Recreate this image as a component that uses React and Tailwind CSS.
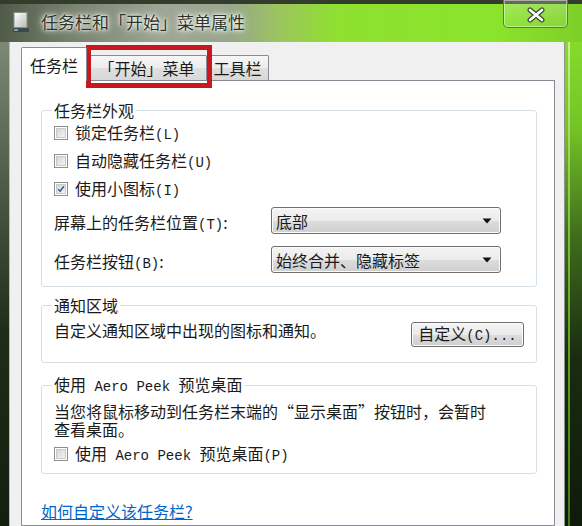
import React from "react";

function M({ children }) {
  return (
    <span className="font-['Liberation_Mono',monospace] text-[14px]">{children}</span>
  );
}

function Checkbox({ checked }) {
  return (
    <div className="w-[14px] h-[14px] shrink-0 border border-[#8e8f8f] bg-white p-[1px]">
      <div className="w-full h-full border border-[#c9c9c9] bg-[linear-gradient(135deg,#d6d6d6,#f4f4f4)] flex items-center justify-center">
        {checked && (
          <svg width="10" height="10" viewBox="0 0 10 10">
            <path d="M1.5 5.2 L4 7.8 L8.6 1.6" fill="none" stroke="#3d5391" strokeWidth="1.8" />
          </svg>
        )}
      </div>
    </div>
  );
}

function Select({ value }) {
  return (
    <div className="w-[230px] h-[27px] rounded-[3px] border border-[#707070] bg-[linear-gradient(to_bottom,#f4f4f4_0%,#ebebeb_50%,#dddddd_51%,#cfcfcf_100%)] flex items-center justify-between pl-[4px] pr-[8px] shadow-[inset_0_0_0_1px_#fbfbfb]">
      <span className="text-[16px] leading-[18px] text-[#1a1a1a]">{value}</span>
      <svg width="10" height="6" viewBox="0 0 10 6">
        <path d="M0.5 0.5 H9.5 L5 5.5 Z" fill="#111" />
      </svg>
    </div>
  );
}

function Group({ title, className = "", children }) {
  return (
    <fieldset className={"border border-[#d5dfe5] rounded-[3px] pl-[12px] pr-[12px] " + className}>
      <legend className="text-[16px] leading-[18px] px-[2px] -ml-[2px] text-[#1a1a1a]">{title}</legend>
      {children}
    </fieldset>
  );
}

export default function App() {
  return (
    <div className="relative w-[582px] h-[526px] overflow-hidden flex flex-col bg-[#16230f] font-['Noto_Sans_CJK_SC',sans-serif] text-[#1a1a1a]">
      {/* Title bar */}
      <div className="h-[42px] shrink-0 flex items-start justify-between bg-[linear-gradient(to_right,#4f5b48_0%,#76826e_12%,#9ea796_28%,#98a68a_40%,#9cc55e_48%,#8fe030_58%,#8ae42c_85%,#7dcf28_100%)] border-t-[4px] border-[#323d2c]">
        <div className="flex items-center h-[36px] pl-[13px] gap-[12px]">
          <svg width="16" height="21" viewBox="0 0 16 21">
            <defs>
              <linearGradient id="ig" x1="0" y1="0" x2="1" y2="1">
                <stop offset="0" stopColor="#ffffff" />
                <stop offset="1" stopColor="#b8bcb4" />
              </linearGradient>
            </defs>
            <rect x="1" y="0.5" width="13" height="15" fill="url(#ig)" stroke="#8a8f86" />
            <rect x="0" y="16" width="16" height="4" fill="#3c4a46" />
            <rect x="1" y="17" width="4" height="2" fill="#6fa0c8" />
          </svg>
          <span className="text-[17px] leading-[20px] text-[#2e332b] [text-shadow:0_0_8px_#ffffff,0_0_4px_#ffffff,0_0_2px_#ffffff]">
            任务栏和「开始」菜单属性
          </span>
        </div>
        <div className="w-[65px] h-[28px] -mt-[4px] mr-[14px] rounded-b-[5px] border border-t-0 border-[#5d7a3c] shadow-[inset_0_0_0_1px_rgba(255,255,255,0.45)] bg-[linear-gradient(to_bottom,rgba(255,255,255,0.25),rgba(255,255,255,0.05))] flex items-center justify-center pt-[3px]">
          <svg width="20" height="16" viewBox="0 0 20 16">
            <path d="M4 3 L16 13 M16 3 L4 13" stroke="#3b4a34" strokeWidth="5" strokeLinecap="round" />
            <path d="M4 3 L16 13 M16 3 L4 13" stroke="#ffffff" strokeWidth="2.6" strokeLinecap="round" />
          </svg>
        </div>
      </div>

      {/* Body */}
      <div className="flex-1 flex min-h-0">
        <div className="w-[10px] shrink-0 bg-[linear-gradient(to_bottom,#7d8975_0%,#4e5a46_30%,#1f2c18_60%,#132010_100%)] border-r border-[#b9c0b2]" />
        <div className="w-[555px] shrink-0 bg-[#f0f0f0] border-r border-[#8f948b] pl-[11px] pr-[9px] pt-[5px] flex flex-col">
          {/* Tabs */}
          <div className="h-[33px] flex items-end shrink-0">
            <div className="relative z-10 w-[66px] h-[34px] -mb-[1px] bg-white border border-b-0 border-[#898c95] rounded-t-[2px] flex items-center justify-center">
              <span className="text-[16px] leading-[18px]">任务栏</span>
            </div>
            <div className="w-[120px] h-[25px] bg-[linear-gradient(to_bottom,#f7f7f7_0%,#ececec_50%,#dfdfdf_51%,#d8d8d8_100%)] border border-b-0 border-l-0 border-[#898c95] rounded-t-[2px] flex items-center justify-center">
              <span className="text-[16px] leading-[18px]">「开始」菜单</span>
            </div>
            <div className="w-[62px] h-[25px] bg-[linear-gradient(to_bottom,#f7f7f7_0%,#ececec_50%,#dfdfdf_51%,#d8d8d8_100%)] border border-b-0 border-l-0 border-[#898c95] rounded-t-[2px] flex items-center justify-center">
              <span className="text-[16px] leading-[18px]">工具栏</span>
            </div>
          </div>

          {/* Panel */}
          <div className="flex-1 bg-white border border-[#898c95] pl-[19px] pr-[17px] pt-[20px]">
            <Group title="任务栏外观" className="pb-[13px]">
              <div className="h-[28px] flex items-center gap-[7px]">
                <Checkbox />
                <span className="text-[16px] leading-[18px]">锁定任务栏<M>(L)</M></span>
              </div>
              <div className="h-[28px] flex items-center gap-[7px]">
                <Checkbox />
                <span className="text-[16px] leading-[18px]">自动隐藏任务栏<M>(U)</M></span>
              </div>
              <div className="h-[28px] flex items-center gap-[7px]">
                <Checkbox checked />
                <span className="text-[16px] leading-[18px]">使用小图标<M>(I)</M></span>
              </div>
              <div className="mt-[4px] h-[27px] flex items-center">
                <span className="w-[217px] shrink-0 text-[16px] leading-[18px] pt-[5px]">屏幕上的任务栏位置<M>(T)</M>:</span>
                <Select value="底部" />
              </div>
              <div className="mt-[12px] h-[27px] flex items-center">
                <span className="w-[217px] shrink-0 text-[16px] leading-[18px] pt-[5px]">任务栏按钮<M>(B)</M>:</span>
                <Select value="始终合并、隐藏标签" />
              </div>
            </Group>

            <Group title="通知区域" className="mt-[9px] pb-[15px]">
              <div className="flex items-start justify-between">
                <span className="mt-[7px] text-[16px] leading-[18px]">自定义通知区域中出现的图标和通知。</span>
                <div className="mt-[8px] w-[113px] h-[25px] rounded-[3px] border border-[#707070] bg-[linear-gradient(to_bottom,#f4f4f4_0%,#ebebeb_50%,#dddddd_51%,#cfcfcf_100%)] shadow-[inset_0_0_0_1px_#fbfbfb] flex items-center justify-center">
                  <span className="text-[16px] leading-[18px]">自定义<M>(C)...</M></span>
                </div>
              </div>
            </Group>

            <Group
              title={<>使用<M> Aero Peek </M>预览桌面</>}
              className="mt-[12px] pb-[6px]"
            >
              <div className="mt-[6px] text-[16px] leading-[18px]">
                <div>当您将鼠标移动到任务栏末端的“显示桌面”按钮时，会暂时</div>
                <div>查看桌面。</div>
              </div>
              <div className="mt-[3px] h-[26px] flex items-center gap-[7px]">
                <Checkbox />
                <span className="text-[16px] leading-[18px]">使用<M> Aero Peek </M>预览桌面<M>(P)</M></span>
              </div>
            </Group>

            <div className="mt-[28px] text-[16px] leading-[18px]">
              <span className="text-[#0066cc] underline">如何自定义该任务栏?</span>
            </div>
          </div>
        </div>
        <div className="flex-1 bg-[linear-gradient(to_bottom,#86da2c_0%,#74c326_18%,#3f6d1c_40%,#1a2c10_65%,#0f1a0a_100%)] flex">
          <div className="w-[3px]" />
          <div className="w-[2px] bg-[linear-gradient(to_bottom,#c8f08a,#6bb52a_50%,#3f7a1a)]" />
        </div>
      </div>

      {/* red highlight overlay */}
      <div className="absolute left-[86px] top-[45px] w-[126px] h-[43px] border-[5px] border-[#c8171d]" />
    </div>
  );
}
